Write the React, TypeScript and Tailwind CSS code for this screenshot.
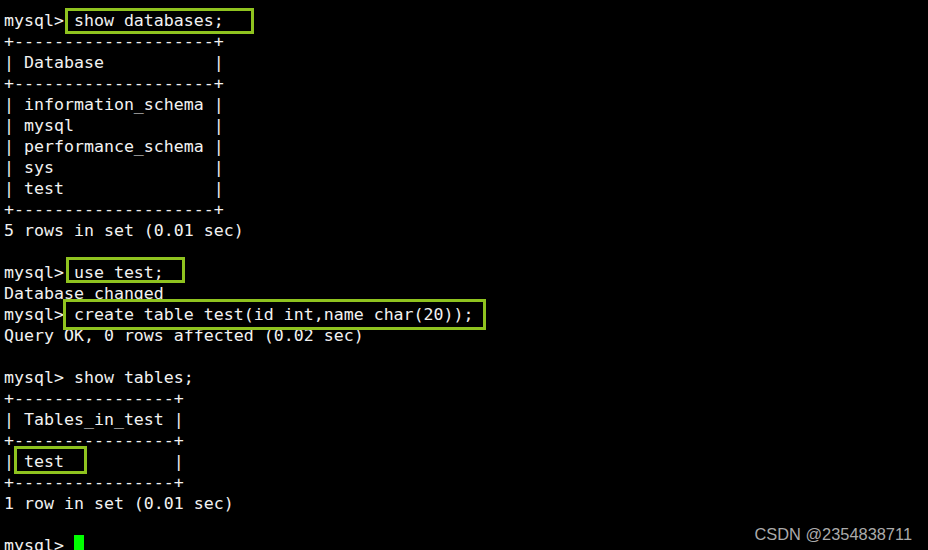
const lines: string[] = [
  'mysql> show databases;',
  '+--------------------+',
  '| Database           |',
  '+--------------------+',
  '| information_schema |',
  '| mysql              |',
  '| performance_schema |',
  '| sys                |',
  '| test               |',
  '+--------------------+',
  '5 rows in set (0.01 sec)',
  '',
  'mysql> use test;',
  'Database changed',
  'mysql> create table test(id int,name char(20));',
  'Query OK, 0 rows affected (0.02 sec)',
  '',
  'mysql> show tables;',
  '+----------------+',
  '| Tables_in_test |',
  '+----------------+',
  '| test           |',
  '+----------------+',
  '1 row in set (0.01 sec)',
  '',
];

// green annotation boxes drawn over the screenshot
const marks = [
  'left-[65px] top-[8px] w-[189px] h-[26px]',
  'left-[66px] top-[257px] w-[119px] h-[26px]',
  'left-[63px] top-[299px] w-[423px] h-[31px]',
  'left-[14px] top-[446px] w-[73px] h-[28px]',
];

export default function App() {
  return (
    <div className="relative w-[928px] h-[550px] overflow-hidden bg-black">
      <div
        className="pt-[10px] pl-[4px] text-[16.6px] leading-[21px] text-[#f2f2f2] whitespace-pre"
        style={{ fontFamily: '"DejaVu Sans Mono", "Liberation Mono", monospace' }}
      >
        {lines.map((line, idx) => (
          <div key={idx} className="h-[21px]">{line}</div>
        ))}
        <div className="h-[21px] flex">
          <span>mysql&gt; </span>
          <span className="inline-block w-[10px] h-[21px] bg-[#00ff00]" />
        </div>
      </div>

      {marks.map((m, idx) => (
        <div key={idx} className={`absolute border-[3px] border-[#8fc31f] ${m}`} />
      ))}

      <div
        className="absolute right-[16px] bottom-[6px] text-[16.4px] leading-[20px] text-[#ababab]"
        style={{ fontFamily: '"Liberation Sans", Arial, sans-serif' }}
      >
        CSDN @2354838711
      </div>
    </div>
  );
}
